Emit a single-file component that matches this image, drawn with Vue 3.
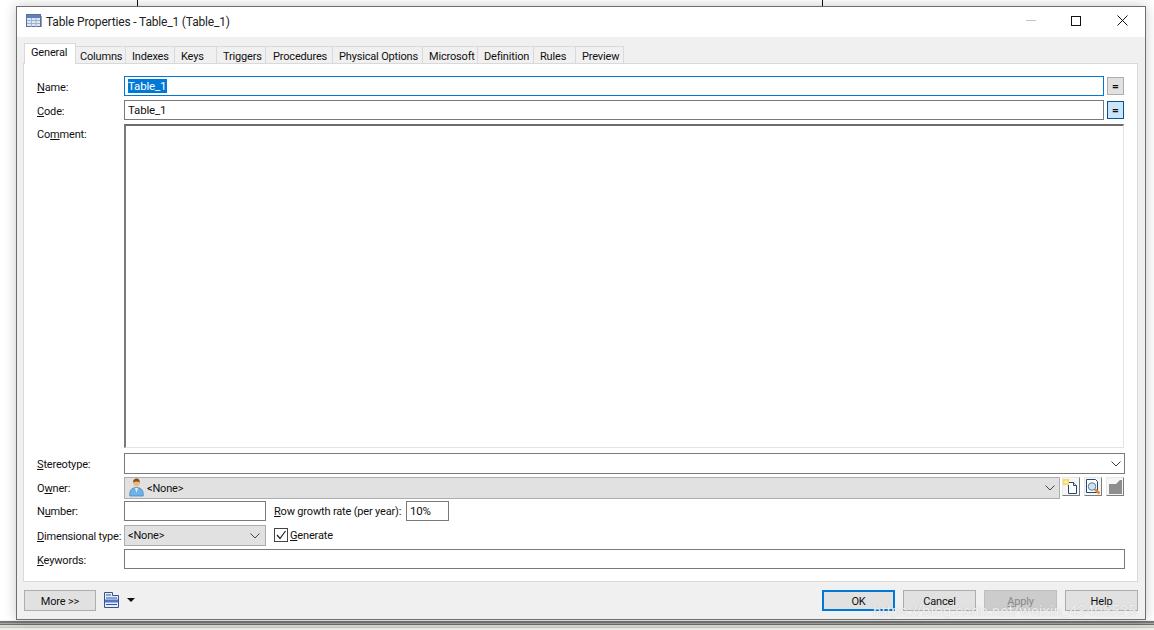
<script setup>
const tabs = [
  { label: 'Columns', w: 50, pad: 4 },
  { label: 'Indexes', w: 49, pad: 6 },
  { label: 'Keys', w: 42, pad: 6 },
  { label: 'Triggers', w: 49, pad: 6 },
  { label: 'Procedures', w: 67, pad: 7 },
  { label: 'Physical Options', w: 90, pad: 6 },
  { label: 'Microsoft', w: 55, pad: 6 },
  { label: 'Definition', w: 56, pad: 6 },
  { label: 'Rules', w: 42, pad: 6 },
  { label: 'Preview', w: 48, pad: 6 }
]
</script>

<template>
  <div class="page">
    <i class="bg-line bl1"></i>
    <i class="bg-line bl2"></i>
    <div class="bottom-band"></div>
    <div class="win">
      <header class="title">
        <svg class="ticon" width="16" height="14" viewBox="0 0 16 14">
          <rect x="0.5" y="0.5" width="14" height="12" fill="#dfe7f6" stroke="#5c6f94" />
          <rect x="1" y="1" width="13" height="3" fill="#5f7fc0" />
          <path d="M1 6.500h13M1 9.500h13M5.500 4v9M10 4v9" stroke="#9fb0d0" fill="none" />
          <path d="M15.500 2v11" stroke="#9aa0a8" />
        </svg>
        <span class="ttext">Table Properties - Table_1 (Table_1)</span>
        <div class="wbtns">
          <i class="min"></i>
          <i class="max"></i>
          <svg class="close" width="11" height="11" viewBox="0 0 11 11"><path d="M.5.5l10 10M10.500.5l-10 10" stroke="#111" fill="none" /></svg>
        </div>
      </header>

      <div class="body">
        <nav class="tabs">
          <div class="tab active">General</div>
          <div v-for="t in tabs" :key="t.label" class="tab" :style="{ width: t.w + 'px', paddingLeft: t.pad + 'px' }">{{ t.label }}</div>
        </nav>

        <section class="panel">
          <div class="row r-name">
            <label><u>N</u>ame:</label>
            <div class="input focus"><span class="sel">Table_1</span></div>
            <button class="eq">=</button>
          </div>
          <div class="row r-code">
            <label><u>C</u>ode:</label>
            <div class="input">Table_1</div>
            <button class="eq on">=</button>
          </div>
          <div class="row r-comment">
            <label>Co<u>m</u>ment:</label>
            <div class="textarea"></div>
          </div>
          <div class="row r-ster">
            <label><u>S</u>tereotype:</label>
            <div class="input wide combo">
              <svg class="chev" width="10" height="6" viewBox="0 0 10 6"><path d="M.5.500L5 5l4.500-4.500" fill="none" stroke="#444" /></svg>
            </div>
          </div>
          <div class="row r-owner">
            <label>O<u>w</u>ner:</label>
            <div class="gray owner">
              <svg class="person" width="15" height="19" viewBox="0 0 15 19">
                <path d="M.8 18c-.5-5 1.500-8.500 6.700-8.500s7.200 3.500 6.700 8.500z" fill="#6fb2e8" stroke="#3f7fb8" stroke-width=".7" />
                <path d="M6 10l1.500 5 1.500-5z" fill="#dcecf8" />
                <circle cx="7.500" cy="5" r="3.300" fill="#f0b878" />
                <path d="M4.200 4.500C3.900 1.600 5.800.5 7.800.5c2 0 3.200 1.700 3 4C9.700 3 6 3 4.200 4.500z" fill="#7a4e14" />
              </svg>
              <span>&lt;None&gt;</span>
              <svg class="chev" width="10" height="6" viewBox="0 0 10 6"><path d="M.5.500L5 5l4.500-4.500" fill="none" stroke="#444" /></svg>
            </div>
            <div class="ibtns">
              <button class="ibtn">
                <svg width="16" height="16" viewBox="0 0 16 16">
                  <path d="M5.500 3.500h5l3 3v8h-8z" fill="#fff" stroke="#27457c" />
                  <path d="M10.500 3.500v3h3" fill="#dfe8f5" stroke="#27457c" />
                  <path d="M0 0h6v6H0z" fill="#f7d95a" />
                  <path d="M2.500 1h1v4h-1zM1 2.500h4v1H1z" fill="#fff6c4" />
                </svg>
              </button>
              <button class="ibtn">
                <svg width="16" height="16" viewBox="0 0 16 16">
                  <path d="M1.500 .5h9l2 2v11h-11z" fill="#fff" stroke="#27457c" />
                  <circle cx="7" cy="7.500" r="3.800" fill="#cfe3ee" stroke="#5d7f96" />
                  <path d="M10 10.500l4.500 4" stroke="#e08a2c" stroke-width="2.400" />
                </svg>
              </button>
              <button class="ibtn">
                <svg width="15" height="15" viewBox="0 0 15 15"><path d="M1 5h7l4-4h2v14H1z" fill="#8e8e8e" /></svg>
              </button>
            </div>
          </div>
          <div class="row r-num">
            <label>N<u>u</u>mber:</label>
            <div class="input short"></div>
            <label class="growth"><u>R</u>ow growth rate (per year):</label>
            <div class="input pct">10%</div>
          </div>
          <div class="row r-dim">
            <label><u>D</u>imensional type:</label>
            <div class="gray dim">
              <span>&lt;None&gt;</span>
              <svg class="chev" width="10" height="6" viewBox="0 0 10 6"><path d="M.5.500L5 5l4.500-4.500" fill="none" stroke="#444" /></svg>
            </div>
            <div class="check">
              <svg width="12" height="12" viewBox="0 0 12 12"><path d="M2 6l3 3.500L10.500 2" fill="none" stroke="#222" stroke-width="1.200" /></svg>
            </div>
            <span class="gen"><u>G</u>enerate</span>
          </div>
          <div class="row r-key">
            <label><u>K</u>eywords:</label>
            <div class="input wide"></div>
          </div>
        </section>

        <footer class="foot">
          <button class="btn more">More &gt;&gt;</button>
          <svg class="listicon" width="15" height="16" viewBox="0 0 15 16">
            <path d="M.5.500h8v3h6v12H.5z" fill="#e8eef8" stroke="#36558f" />
            <path d="M2 3h5M2 6h11M2 12.500h11" stroke="#36558f" fill="none" />
            <rect x="1" y="7.500" width="13" height="3" fill="#4f74d8" />
          </svg>
          <i class="caret"></i>
          <div class="spacer"></div>
          <button class="btn ok">OK</button>
          <button class="btn">Cancel</button>
          <button class="btn disabled"><u>A</u>pply</button>
          <button class="btn">Help</button>
        </footer>
      </div>
    </div>
    <div class="wm">https://blog.csdn.net/weixin_43405525</div>
  </div>
</template>

<style>
html, body { margin: 0; background: #fff; overflow: hidden; }
</style>

<style scoped>
.page {
  position: relative;
  width: 1154px;
  height: 630px;
  overflow: hidden;
  background: #fff;
  font-family: Roboto, "Noto Sans", sans-serif;
  font-size: 11px;
  letter-spacing: -.17px;
  color: #111;
  padding: 6px 0 0 16px;
  box-sizing: border-box;
}
.bg-line { position: absolute; top: 0; width: 1px; height: 7px; background: #111; }
.bl1 { left: 137px; }
.bl2 { left: 822px; }
.bottom-band {
  position: absolute;
  left: 0;
  right: 0;
  bottom: 0;
  height: 10px;
  background: linear-gradient(#f2f2f2 0 1px, #777 1px 3px, #a8a8a2 3px 4px, #6f6f6b 4px 5px, #dcdcd6 5px 7px, #c8c8c2 7px 8px, #efefea 8px);
}
.win {
  position: relative;
  width: 1130px;
  height: 614px;
  box-sizing: border-box;
  border: 1px solid #6e6e6e;
  background: #f0f0f0;
  box-shadow: 0 0 12px rgba(0, 0, 0, .22);
  display: flex;
  flex-direction: column;
}
.title {
  height: 30px;
  flex: none;
  background: #fff;
  display: flex;
  align-items: center;
  padding-left: 9px;
  box-sizing: border-box;
}
.ticon { margin-right: 4px; margin-top: -2px; }
.ttext { font-size: 12px; margin-top: -1px; color: #222; }
.wbtns { margin-left: auto; display: flex; align-items: center; height: 100%; margin-top: -3px; }
.min { width: 10px; height: 1px; background: #c4c4c4; margin-right: 35px; }
.max { width: 8px; height: 8px; border: 1px solid #111; margin-right: 36px; }
.close { margin-right: 17px; }
.body {
  flex: 1;
  display: flex;
  flex-direction: column;
  padding: 7px 7px 0 6px;
  min-height: 0;
}
.tabs {
  height: 20px;
  display: flex;
  align-items: flex-end;
  padding-left: 1px;
  margin-bottom: -1px;
  position: relative;
  z-index: 1;
}
.tab {
  height: 18px;
  box-sizing: border-box;
  border: 1px solid #d9d9d9;
  border-left: 0;
  line-height: 19px;
  white-space: nowrap;
  background: #f0f0f0;
}
.tab.active {
  height: 21px;
  width: 52px;
  background: #fff;
  border: 1px solid #d9d9d9;
  border-bottom: 0;
  line-height: 17px;
  padding-left: 6px;
}
.panel {
  height: 519px;
  width: 1115px;
  box-sizing: border-box;
  background: #fff;
  border: 1px solid #d9d9d9;
  padding: 12px 0 0 13px;
  display: flex;
  flex-direction: column;
}
.row { display: flex; align-items: center; flex: none; }
label { width: 87px; flex: none; color: #111; margin-top: 1px; white-space: nowrap; }
.r-name label, .r-code label, .r-key label { margin-top: 2px; }
.r-name { height: 20px; }
.r-code { height: 20px; margin-top: 4px; }
.r-comment { height: 324px; margin-top: 4px; align-items: flex-start; }
.r-comment label { margin-top: 4px; }
.r-ster { height: 21px; margin-top: 5px; }
.r-owner { height: 22px; margin-top: 3px; }
.r-num { height: 20px; margin-top: 2px; }
.r-dim { height: 21px; margin-top: 4px; }
.r-key { height: 20px; margin-top: 3px; }
.input {
  width: 980px;
  height: 100%;
  flex: none;
  box-sizing: border-box;
  border: 1px solid #7a7a7a;
  padding-left: 3px;
  font-size: 11.5px;
  line-height: 19px;
  background: #fff;
}
.input.focus { border-color: #0078d7; line-height: 18px; }
.input.wide { width: 1001px; }
.input.short { width: 142px; }
.input.pct { width: 43px; line-height: 18px; }
.combo { display: flex; align-items: center; justify-content: flex-end; padding-right: 3px; }
.sel { background: #0078d7; color: #fff; display: inline-block; line-height: 14px; padding: 0 1px 0 0; }
.eq {
  margin-left: 3px;
  width: 17px;
  height: 18px;
  padding: 0;
  box-sizing: border-box;
  border: 1px solid #adadad;
  background: #e1e1e1;
  font: 700 11px/14px "Noto Sans", sans-serif;
  color: #111;
}
.eq.on { border-color: #005499; background: #cce4f7; }
.textarea {
  width: 1000px;
  height: 100%;
  flex: none;
  box-sizing: border-box;
  border: 1px solid #e3e3e3;
  border-top: 2px solid #6d6d6d;
  border-left: 2px solid #7a7a7a;
}
.gray {
  height: 100%;
  box-sizing: border-box;
  background: #e1e1e1;
  border: 1px solid #adadad;
  display: flex;
  align-items: center;
  flex: none;
}
.owner { width: 936px; padding: 0 4px 0 4px; }
.person { margin-right: 3px; margin-top: -2px; }
.dim { width: 142px; padding: 0 5px 0 3px; }
.chev { margin-left: auto; flex: none; }
.ibtns { display: flex; gap: 4px; margin-left: 2px; align-self: flex-start; }
.ibtn {
  width: 18px;
  height: 19px;
  padding: 0;
  box-sizing: border-box;
  border: 1px solid;
  border-color: #e8e8e8 #7c7c7c #7c7c7c #e8e8e8;
  background: #f6f6f6;
  display: flex;
  align-items: center;
  justify-content: center;
}
.growth { width: 128px; margin-left: 8px; margin-right: 4px; }
.check {
  margin-left: 8px;
  width: 14px;
  height: 14px;
  box-sizing: border-box;
  border: 1px solid #444;
  background: #fff;
  display: flex;
  align-items: center;
  justify-content: center;
  margin-top: -2px;
}
.gen { margin-left: 2px; margin-top: 0; color: #111; }
.foot {
  display: flex;
  align-items: flex-start;
  padding: 8px 0 0 1px;
}
.btn {
  width: 73px;
  height: 21px;
  padding: 1px 0 0;
  box-sizing: border-box;
  border: 1px solid #adadad;
  background: #e1e1e1;
  font: 11px/17px Roboto, sans-serif;
  letter-spacing: -.17px;
  color: #111;
  margin-left: 8px;
  flex: none;
}
.btn.more { margin-left: 0; width: 72px; }
.btn.ok { border: 2px solid #0078d7; }
.btn.disabled { background: #cccccc; border-color: #bfbfbf; color: #888; }
.listicon { margin-left: 8px; margin-top: 2px; flex: none; }
.caret {
  margin-left: 8px;
  margin-top: 8px;
  width: 0;
  height: 0;
  border: 4px solid transparent;
  border-top: 4px solid #111;
  border-bottom: 0;
}
.spacer { flex: 1; }
.wm {
  position: absolute;
  left: 873px;
  top: 602px;
  font-family: Roboto, sans-serif;
  font-size: 15px;
  line-height: 18px;
  color: rgba(255, 255, 255, .8);
  text-shadow: 0 0 1px rgba(120, 120, 120, .45);
  white-space: nowrap;
  letter-spacing: .05px;
}
</style>
